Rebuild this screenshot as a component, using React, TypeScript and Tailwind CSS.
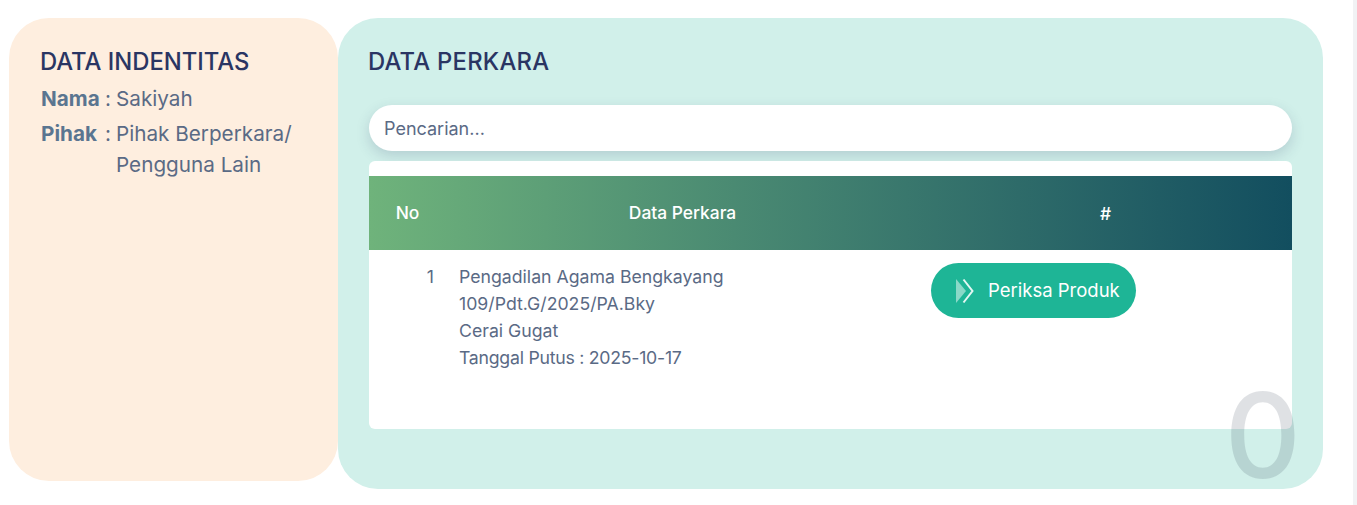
import React from 'react';

const App = () => {
  return (
    <div className="w-full h-[505px] overflow-hidden bg-white font-['Inter',sans-serif] text-[#5a6a85] flex">
      <div className="flex-1 flex items-start pl-[9px] pt-[18px]">
        {/* Data identitas */}
        <div className="w-[329px] h-[463px] bg-[#feeedf] rounded-[40px] pt-[28px] pl-[31px] pr-4">
          <h2 className="text-[23.8px] leading-[32px] text-[#2a3563] font-medium">DATA INDENTITAS</h2>
          <div className="mt-[5px] text-[20.7px] leading-[31px] flex">
            <b className="w-[64px] ml-px font-bold text-[#5a7590]">Nama</b>
            <span className="w-[11px]">:</span>
            <span>Sakiyah</span>
          </div>
          <div className="mt-[4px] text-[20.7px] leading-[31px] flex">
            <b className="w-[64px] ml-px font-bold text-[#5a7590]">Pihak</b>
            <span className="w-[11px]">:</span>
            <span>Pihak Berperkara/<br />Pengguna Lain</span>
          </div>
        </div>

        {/* Data perkara */}
        <div className="relative w-[985px] h-[471px] bg-[#d1f0ea] rounded-[40px] pt-[28px] px-[31px]">
          <h2 className="-ml-px text-[23.8px] tracking-[0.25px] leading-[32px] text-[#2a3563] font-medium">DATA PERKARA</h2>
          <div className="mt-[27px] h-[46px] bg-white rounded-full shadow-[0_5px_14px_rgba(42,53,99,0.18)] flex items-center pl-[15px] pr-4 text-[18px]">Pencarian...</div>
          <div className="mt-[10px] h-[268px] bg-white rounded-md pt-[15px]">
            <div className="h-[74px] pt-px bg-gradient-to-r from-[#6fb37b] to-[#124e5f] flex items-center text-white font-medium text-[17.4px]">
              <span className="w-[77px] text-center">No</span>
              <span className="w-[473px] text-center">Data Perkara</span>
              <span className="w-[373px] text-center pt-[2px]">#</span>
            </div>
            <div className="flex text-[17.7px] leading-[27px] pt-[13px]">
              <span className="w-[65px] text-right">1</span>
              <div className="ml-[25px] w-[472px]">
                <div>Pengadilan Agama Bengkayang</div>
                <div>109/Pdt.G/2025/PA.Bky</div>
                <div>Cerai Gugat</div>
                <div className="tracking-[-0.25px]">Tanggal Putus : 2025-10-17</div>
              </div>
              <div className="h-[55px] w-[205px] rounded-full bg-[#1eb596] text-white text-[18.5px] flex items-center gap-[14px] pl-[25px]">
                <svg width="18" height="26" viewBox="0 0 18 26">
                  <path d="M0 1l10 12L0 25z" fill="#8ad9c8" />
                  <path d="M7.5 1.5l9 11.5-9 11.5" stroke="#e4f7f3" strokeWidth="2" fill="none" />
                </svg>
                Periksa Produk
              </div>
            </div>
          </div>
          {/* angka di pojok, melewati tepi kartu */}
          <div className="absolute right-[22px] bottom-[-5px] text-[118px] leading-[118px] font-[450] text-[#2a3547]/15">0</div>
        </div>
      </div>
      <div className="w-[4px] h-full bg-[#f1f2f4]" />
    </div>
  );
};

export default App;
